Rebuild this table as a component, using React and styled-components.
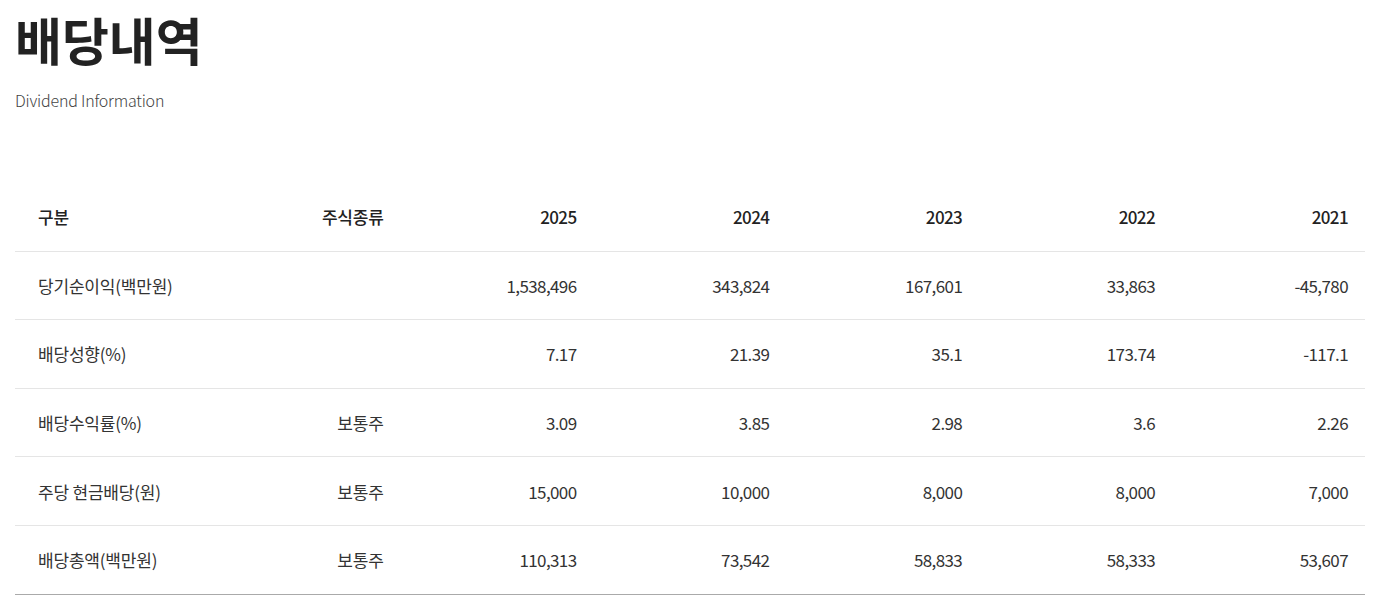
import React from "react";
import styled, { createGlobalStyle } from "styled-components";

const GlobalStyle = createGlobalStyle`
  html, body {
    margin: 0;
    padding: 0;
    background: #fff;
  }
  body {
    font-family: "Noto Sans CJK KR", "Noto Sans", sans-serif;
    color: #333;
  }
`;

const Page = styled.div`
  padding: 0 27px 0 15px;
`;

const Title = styled.h1`
  margin: 0;
  padding-top: 3px;
  font-size: 51px;
  line-height: 72px;
  font-weight: 700;
  letter-spacing: 0;
  color: #222;
`;

const SubTitle = styled.p`
  margin: 13px 0 0;
  font-size: 16px;
  line-height: 24px;
  font-weight: 300;
  letter-spacing: -0.2px;
  color: #444;
`;

const Table = styled.table`
  width: 100%;
  margin-top: 71px;
  border-collapse: collapse;
  table-layout: fixed;
  border-bottom: 1px solid #aaa;
`;

const Cell = styled.td`
  height: 67.6px;
  padding: 0 17px 0 ${(p) => (p.$first ? "23px" : "17px")};
  font-size: 17px;
  letter-spacing: ${(p) => (p.$num ? "-0.6px" : "-0.2px")};
  text-align: ${(p) => (p.$first ? "left" : "right")};
  color: #333;
  font-weight: 400;
  border-bottom: 1px solid #e5e5e5;
  tbody tr:last-child > & {
    border-bottom: none;
  }
`;

const HeadCell = styled(Cell).attrs({ as: "th" })`
  font-weight: 500;
  color: #222;
`;

const years = ["2025", "2024", "2023", "2022", "2021"];

const rows = [
  { label: "당기순이익(백만원)", kind: "", values: ["1,538,496", "343,824", "167,601", "33,863", "-45,780"] },
  { label: "배당성향(%)", kind: "", values: ["7.17", "21.39", "35.1", "173.74", "-117.1"] },
  { label: "배당수익률(%)", kind: "보통주", values: ["3.09", "3.85", "2.98", "3.6", "2.26"] },
  { label: "주당 현금배당(원)", kind: "보통주", values: ["15,000", "10,000", "8,000", "8,000", "7,000"] },
  { label: "배당총액(백만원)", kind: "보통주", values: ["110,313", "73,542", "58,833", "58,333", "53,607"] },
];

export default function App() {
  return (
    <>
      <GlobalStyle />
      <Page>
        <Title>배당내역</Title>
        <SubTitle>Dividend Information</SubTitle>
        <Table>
          <thead>
            <tr>
              <HeadCell $first>구분</HeadCell>
              <HeadCell>주식종류</HeadCell>
              {years.map((y) => (
                <HeadCell key={y} $num>
                  {y}
                </HeadCell>
              ))}
            </tr>
          </thead>
          <tbody>
            {rows.map((r) => (
              <tr key={r.label}>
                <Cell $first>{r.label}</Cell>
                <Cell>{r.kind}</Cell>
                {r.values.map((v, i) => (
                  <Cell key={i} $num>
                    {v}
                  </Cell>
                ))}
              </tr>
            ))}
          </tbody>
        </Table>
      </Page>
    </>
  );
}
